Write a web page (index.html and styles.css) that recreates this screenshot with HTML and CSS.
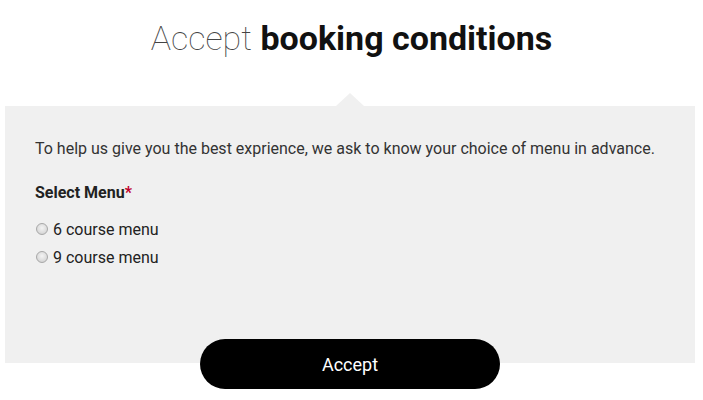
FILE: index.html
```html
<!DOCTYPE html>
<html>
<head>
<meta charset="utf-8">
<link rel="stylesheet" href="styles.css">
</head>
<body>
<h1 class="title"><span class="light">Accept</span> <span class="bold">booking conditions</span></h1>
<div class="panel">
  <p class="intro">To help us give you the best exprience, we ask to know your choice of menu in advance.</p>
  <div class="label">Select Menu<span class="req">*</span></div>
  <label class="option"><input type="radio" name="menu" class="radio"> 6 course menu</label>
  <label class="option"><input type="radio" name="menu" class="radio"> 9 course menu</label>
</div>
<div class="actions"><button class="accept">Accept</button></div>
</body>
</html>
```
FILE: styles.css
```css
html, body { margin: 0; padding: 0; background: #fff; }
body { font-family: Roboto, "Noto Sans", sans-serif; color: #222; width: 703px; }
.title {
  margin: 0;
  padding-top: 18px;
  height: 88px;
  box-sizing: border-box;
  text-align: center;
  font-size: 34px;
  line-height: 40px;
  font-weight: 400;
  color: #111;
}
.light { font-weight: 100; color: #444; }
.bold { font-weight: 700; }
.panel {
  position: relative;
  margin: 18px 8px 0 5px;
  background: #f0f0f0;
  padding: 32px 30px 0 30px;
  height: 257px;
  box-sizing: border-box;
}
.panel::before {
  content: "";
  position: absolute;
  top: -13px;
  left: 331px;
  border-left: 14px solid transparent;
  border-right: 14px solid transparent;
  border-bottom: 13px solid #f0f0f0;
}
.intro { margin: 0; font-size: 16px; line-height: 22px; color: #333; }
.label { margin-top: 22px; font-size: 16px; font-weight: 700; line-height: 22px; color: #222; margin-bottom: 12px; }
.req { color: #c0002a; }
.option { display: flex; align-items: center; font-size: 16px; line-height: 28px; color: #222; }
.radio {
  appearance: none;
  -webkit-appearance: none;
  margin: 0 5px 0 1px;
  width: 12px; height: 12px;
  border-radius: 50%;
  border: 1px solid #a8a8a8;
  background: radial-gradient(circle at 50% 40%, #f4f4f4 0%, #dcdcdc 60%, #c8c8c8 100%);
  box-sizing: border-box;
  position: relative;
  top: -1px;
}
.actions { display: flex; justify-content: center; margin-top: -24px; }
.accept {
  position: relative;
  z-index: 1;
  width: 300px; height: 50px;
  border: 0; border-radius: 25px;
  background: #000; color: #fff;
  font-family: Roboto, sans-serif; font-size: 18px; font-weight: 400;
  margin-left: -3px;
}
```
